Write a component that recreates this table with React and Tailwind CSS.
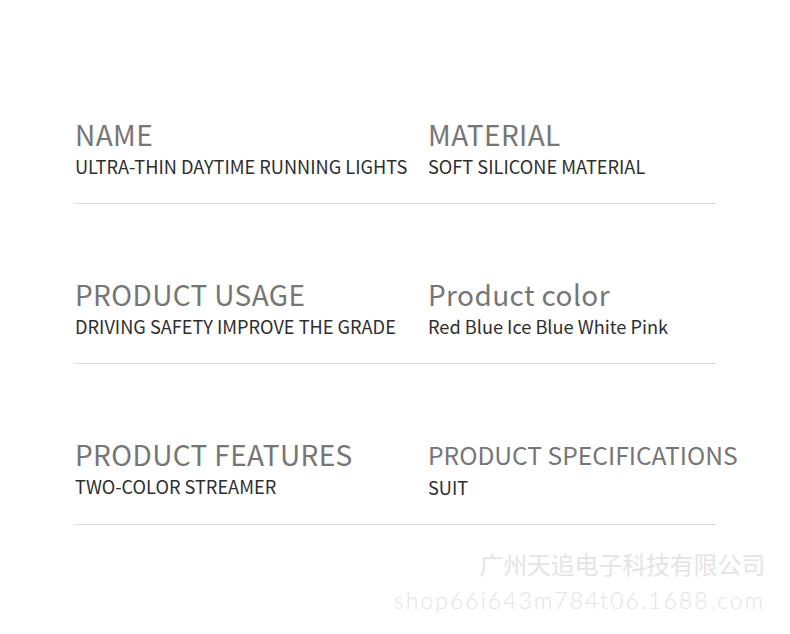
import React from "react";

const rows = [
  [
    { title: "NAME", value: "ULTRA-THIN DAYTIME RUNNING LIGHTS" },
    { title: "MATERIAL", value: "SOFT SILICONE MATERIAL" },
  ],
  [
    { title: "PRODUCT USAGE", value: "DRIVING SAFETY IMPROVE THE GRADE" },
    { title: "Product color", value: "Red Blue Ice Blue White Pink" },
  ],
  [
    { title: "PRODUCT FEATURES", value: "TWO-COLOR STREAMER" },
    { title: "PRODUCT SPECIFICATIONS", value: "SUIT", small: true },
  ],
];

const Cell = ({ title, value, small }) => (
  <div className="whitespace-nowrap">
    <div
      className={
        small
          ? "text-[24.6px] leading-[32px] text-[#767676]"
          : "text-[28px] leading-[32px] tracking-[0.4px] text-[#767676]"
      }
    >
      {title}
    </div>
    <div
      className={
        small
          ? "mt-[5px] text-[18.2px] leading-[24px] text-[#2e2e2e]"
          : "mt-[4px] text-[18.2px] leading-[24px] text-[#2e2e2e]"
      }
    >
      {value}
    </div>
  </div>
);

export default function App() {
  return (
    <div
      className="relative w-[790px] h-[634px] bg-white overflow-hidden"
      style={{ fontFamily: '"Noto Sans CJK SC", "Noto Sans", sans-serif' }}
    >
      <div className="pl-[75px] pt-[118px] w-[716px]">
        {rows.map((row, i) => (
          <div key={i} className={i > 0 ? "mt-[74px]" : ""}>
            <div className="grid grid-cols-[353px_1fr]">
              <Cell {...row[0]} />
              <Cell {...row[1]} />
            </div>
            <div className="mt-[25px] h-px bg-[#d9d9d9]" />
          </div>
        ))}
      </div>

      {/* watermark */}
      <div className="absolute right-[25px] top-[552px] text-right text-[#e4e4e4] leading-none">
        <div
          className="text-[24px] tracking-[-0.2px]"
          style={{ fontFamily: '"Noto Sans CJK SC", sans-serif' }}
        >
          广州天追电子科技有限公司
        </div>
        <div
          className="mt-[13px] text-[23px] font-light tracking-[2px]"
          style={{ fontFamily: 'Lato, "Noto Sans", sans-serif' }}
        >
          shop66i643m784t06.1688.com
        </div>
      </div>
    </div>
  );
}
